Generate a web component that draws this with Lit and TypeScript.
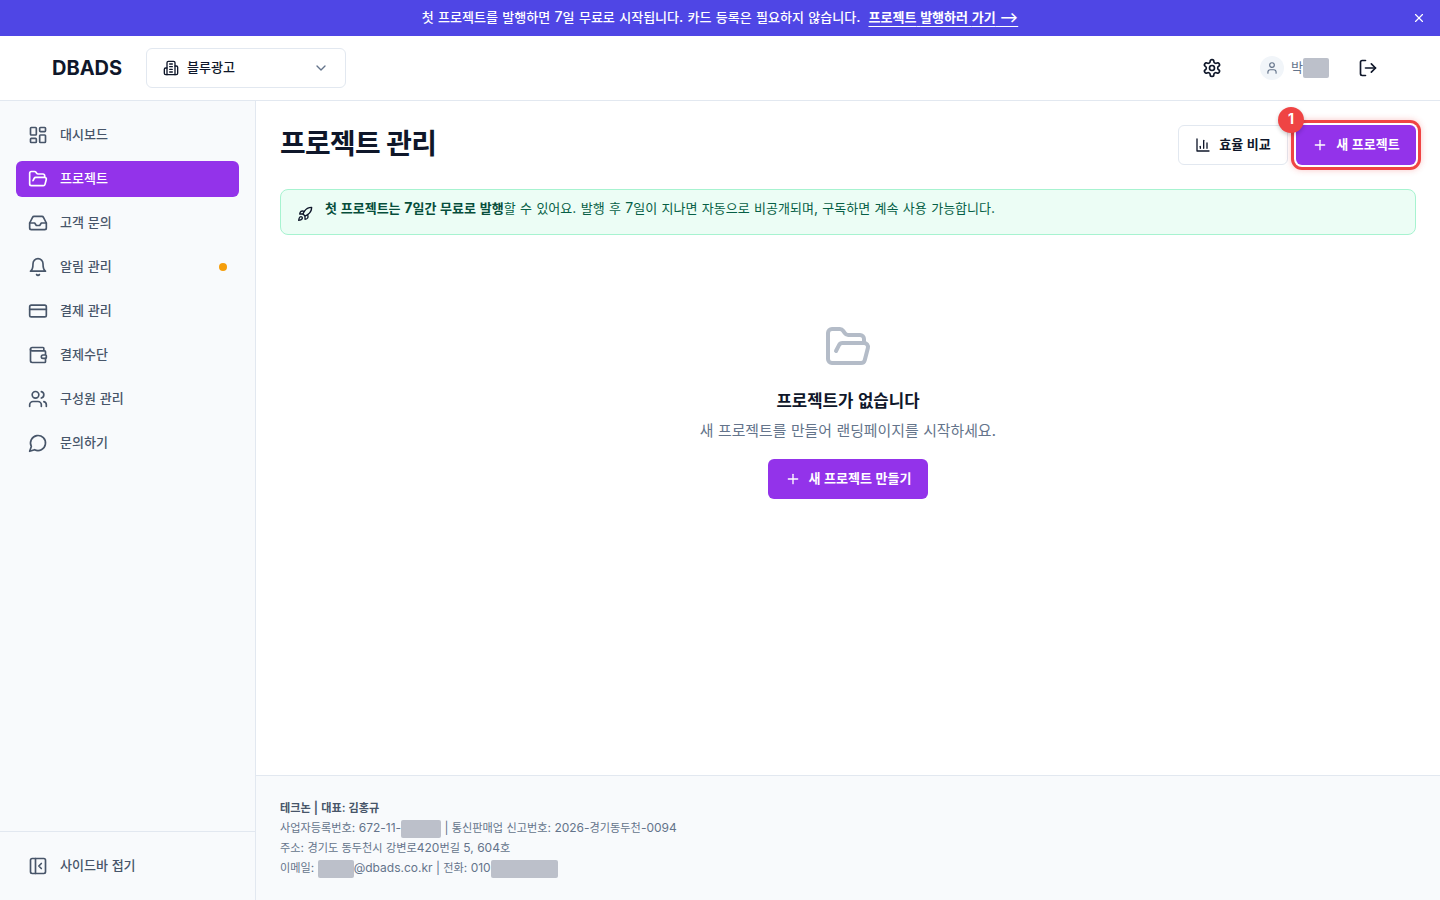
import { LitElement, html, css, svg } from "lit";
import { customElement } from "lit/decorators.js";

const ic = (body: unknown, size = 20, sw = 2) => html`<svg width=${size} height=${size} viewBox="0 0 24 24" fill="none" stroke="currentColor" stroke-width=${sw} stroke-linecap="round" stroke-linejoin="round">${body}</svg>`;

/* Hangul runs are set slightly smaller than Latin, as in the reference; both share one raised baseline */
const k = (t: string) =>
  t.split(/([\uAC00-\uD7A3]+)/).map((p, i) =>
    i % 2 ? html`<span class="k">${p}</span>` : p.trim() ? html`<span class="r">${p}</span>` : p
  );

const I = {
  grid: svg`<rect x="3" y="3" width="7" height="9" rx="1"/><rect x="14" y="3" width="7" height="5" rx="1"/><rect x="14" y="12" width="7" height="9" rx="1"/><rect x="3" y="16" width="7" height="5" rx="1"/>`,
  folder: svg`<path d="m6 14 1.5-2.9A2 2 0 0 1 9.24 10H20a2 2 0 0 1 1.94 2.5l-1.54 6a2 2 0 0 1-1.95 1.5H4a2 2 0 0 1-2-2V5a2 2 0 0 1 2-2h3.9a2 2 0 0 1 1.69.9l.81 1.2a2 2 0 0 0 1.67.9H18a2 2 0 0 1 2 2v2"/>`,
  inbox: svg`<polyline points="22 12 16 12 14 15 10 15 8 12 2 12"/><path d="M5.45 5.11 2 12v6a2 2 0 0 0 2 2h16a2 2 0 0 0 2-2v-6l-3.45-6.89A2 2 0 0 0 16.76 4H7.24a2 2 0 0 0-1.79 1.11z"/>`,
  bell: svg`<path d="M6 8a6 6 0 0 1 12 0c0 7 3 9 3 9H3s3-2 3-9"/><path d="M10.3 21a1.94 1.94 0 0 0 3.4 0"/>`,
  card: svg`<rect width="20" height="14" x="2" y="5" rx="2"/><line x1="2" x2="22" y1="10" y2="10"/>`,
  wallet: svg`<path d="M19 7V4a1 1 0 0 0-1-1H5a2 2 0 0 0 0 4h15a1 1 0 0 1 1 1v4h-3a2 2 0 0 0 0 4h3a1 1 0 0 0 1-1v-2a1 1 0 0 0-1-1"/><path d="M3 5v14a2 2 0 0 0 2 2h15a1 1 0 0 0 1-1v-4"/>`,
  users: svg`<path d="M16 21v-2a4 4 0 0 0-4-4H6a4 4 0 0 0-4 4v2"/><circle cx="9" cy="7" r="4"/><path d="M22 21v-2a4 4 0 0 0-3-3.87"/><path d="M16 3.13a4 4 0 0 1 0 7.75"/>`,
  chat: svg`<path d="M7.9 20A9 9 0 1 0 4 16.1L2 22Z"/>`,
  collapse: svg`<rect width="18" height="18" x="3" y="3" rx="2"/><path d="M9 3v18"/><path d="m16 15-3-3 3-3"/>`,
  building: svg`<path d="M6 22V4a2 2 0 0 1 2-2h8a2 2 0 0 1 2 2v18Z"/><path d="M6 12H4a2 2 0 0 0-2 2v6a2 2 0 0 0 2 2h2"/><path d="M18 9h2a2 2 0 0 1 2 2v9a2 2 0 0 1-2 2h-2"/><path d="M10 6h4"/><path d="M10 10h4"/><path d="M10 14h4"/><path d="M10 18h4"/>`,
  chevron: svg`<path d="m6 9 6 6 6-6"/>`,
  gear: svg`<path d="M12.22 2h-.44a2 2 0 0 0-2 2v.18a2 2 0 0 1-1 1.73l-.43.25a2 2 0 0 1-2 0l-.15-.08a2 2 0 0 0-2.73.73l-.22.38a2 2 0 0 0 .73 2.73l.15.1a2 2 0 0 1 1 1.72v.51a2 2 0 0 1-1 1.74l-.15.09a2 2 0 0 0-.73 2.73l.22.38a2 2 0 0 0 2.73.73l.15-.08a2 2 0 0 1 2 0l.43.25a2 2 0 0 1 1 1.73V20a2 2 0 0 0 2 2h.44a2 2 0 0 0 2-2v-.18a2 2 0 0 1 1-1.73l.43-.25a2 2 0 0 1 2 0l.15.08a2 2 0 0 0 2.73-.73l.22-.39a2 2 0 0 0-.73-2.73l-.15-.08a2 2 0 0 1-1-1.74v-.5a2 2 0 0 1 1-1.74l.15-.09a2 2 0 0 0 .73-2.73l-.22-.38a2 2 0 0 0-2.73-.73l-.15.08a2 2 0 0 1-2 0l-.43-.25a2 2 0 0 1-1-1.73V4a2 2 0 0 0-2-2z"/><circle cx="12" cy="12" r="3"/>`,
  user: svg`<path d="M19 21v-2a4 4 0 0 0-4-4H9a4 4 0 0 0-4 4v2"/><circle cx="12" cy="7" r="4"/>`,
  logout: svg`<path d="M9 21H5a2 2 0 0 1-2-2V5a2 2 0 0 1 2-2h4"/><polyline points="16 17 21 12 16 7"/><line x1="21" x2="9" y1="12" y2="12"/>`,
  x: svg`<path d="M18 6 6 18"/><path d="m6 6 12 12"/>`,
  plus: svg`<path d="M5 12h14"/><path d="M12 5v14"/>`,
  chart: svg`<path d="M3 3v18h18"/><path d="M18 17V9"/><path d="M13 17V5"/><path d="M8 17v-3"/>`,
  rocket: svg`<path d="M4.5 16.5c-1.5 1.26-2 5-2 5s3.74-.5 5-2c.71-.84.7-2.13-.09-2.91a2.18 2.18 0 0 0-2.91-.09z"/><path d="m12 15-3-3a22 22 0 0 1 2-3.95A12.88 12.88 0 0 1 22 2c0 2.72-.78 7.5-6 11a22.35 22.35 0 0 1-4 2z"/><path d="M9 12H4s.55-3.03 2-4c1.62-1.08 5 0 5 0"/><path d="M12 15v5s3.03-.55 4-2c1.08-1.62 0-5 0-5"/>`,
};

const NAV: [unknown, string, boolean?, boolean?][] = [
  [I.grid, "대시보드"],
  [I.folder, "프로젝트", true],
  [I.inbox, "고객 문의"],
  [I.bell, "알림 관리", false, true],
  [I.card, "결제 관리"],
  [I.wallet, "결제수단"],
  [I.users, "구성원 관리"],
  [I.chat, "문의하기"],
];

@customElement("app-root")
export class AppRoot extends LitElement {
  static styles = css`
    :host { display: flex; flex-direction: column; width: 1440px; height: 900px; overflow: hidden; background: #fff; color: #0f172a;
      font-family: Inter, "Noto Sans CJK KR", "Noto Sans", sans-serif; font-size: 14px; }
    svg { display: block; flex: none; }
    .k { font-size: 0.93em; line-height: 1; vertical-align: 0.13em; }
    .r { line-height: 1; vertical-align: 0.12em; }
    .banner { height: 36px; flex: none; background: #4f46e5; color: #fff; display: flex; align-items: center; justify-content: center; gap: 8px; font-size: 14px; font-weight: 500; word-spacing: 0.6px; position: relative; }
    .banner a { font-weight: 600; text-decoration: underline; text-underline-offset: 2px; word-spacing: 0.2px; }
    .close { position: absolute; right: 14px; top: 11px; }
    .top { height: 64px; flex: none; border-bottom: 1px solid #e2e8f0; display: flex; align-items: center; padding: 0 62px 0 52px; }
    .logo { font-size: 20px; font-weight: 700; width: 94px; color: #0f172a; }
    .select { width: 200px; height: 40px; box-sizing: border-box; border: 1px solid #e2e8f0; border-radius: 6px; display: flex; align-items: center; padding: 0 16px; gap: 8px; font-size: 14px; font-weight: 500; }
    .select .chev { margin-left: auto; color: #64748b; }
    .right { margin-left: auto; display: flex; align-items: center; }
    .gear { margin-right: 38px; color: #0f172a; }
    .avatar { width: 24px; height: 24px; border-radius: 50%; background: #f1f5f9; color: #64748b; display: flex; align-items: center; justify-content: center; margin-right: 7px; }
    .name { font-size: 14px; color: #64748b; display: flex; align-items: center; width: 38px; margin-right: 29px; }
    .blur { display: inline-block; background: #bcc0ca; border-radius: 2px; vertical-align: -5px; }
    .body { flex: 1; display: flex; min-height: 0; }
    .side { width: 256px; flex: none; box-sizing: border-box; background: #f8fafc; border-right: 1px solid #e2e8f0; display: flex; flex-direction: column; }
    .nav { flex: 1; padding: 16px; display: flex; flex-direction: column; gap: 8px; }
    .item { height: 36px; border-radius: 6px; display: flex; align-items: center; gap: 12px; padding: 0 12px; color: #475569; font-size: 14px; font-weight: 500; }
    .item.on { background: #9333ea; color: #fff; }
    .dot { width: 8px; height: 8px; background: #f59e0b; border-radius: 50%; margin-left: auto; }
    .foot { height: 69px; box-sizing: border-box; border-top: 1px solid #e2e8f0; padding: 16px; display: flex; }
    .foot .item { flex: 1; }
    .main { flex: 1; display: flex; flex-direction: column; min-width: 0; background: #fff; }
    .content { flex: 1; padding: 24px 24px 0; }
    .head { display: flex; justify-content: space-between; height: 64px; }
    h1 { margin: 4px 0 0; font-size: 30px; line-height: 36px; font-weight: 700; letter-spacing: -0.7px; color: #0f172a; }
    .btns { display: flex; gap: 8px; }
    .btn { height: 40px; box-sizing: border-box; border-radius: 6px; display: flex; align-items: center; justify-content: center; gap: 8px; font-size: 14px; font-weight: 600; }
    .outline { width: 110px; border: 1px solid #e2e8f0; background: #fff; color: #0f172a; }
    .primary { background: #9333ea; color: #fff; }
    .new { width: 120px; outline: none; box-shadow: 0 0 0 2px #fff, 0 0 0 5px #ef4444, 0 0 6px 5px rgba(239,68,68,.3); position: relative; }
    .badge { position: absolute; left: -18px; top: -18px; width: 26px; height: 26px; box-sizing: border-box; padding-bottom: 3px; border-radius: 50%; background: #ef4444; color: #fff; font-size: 14px; font-weight: 700; display: flex; align-items: center; justify-content: center; box-shadow: 0 2px 4px rgba(0,0,0,.2); }
    .alert { height: 46px; box-sizing: border-box; border: 1px solid #a7f3d0; border-radius: 8px; background: #ecfdf5; display: flex; align-items: flex-start; padding: 10px 16px; gap: 12px; color: #065f46; font-size: 14px; line-height: 20px; word-spacing: 0.4px; }
    .alert svg { margin-top: 6px; color: #0f172a; }
    .alert b { font-weight: 700; color: #064e3b; }
    .empty { display: flex; flex-direction: column; align-items: center; padding-top: 88px; }
    .empty .fi { color: #b4bcc8; }
    .empty h3 { margin: 18px 0 0; font-size: 18px; line-height: 28px; font-weight: 600; color: #0f172a; }
    .empty p { margin: 3px 0 0; font-size: 16px; line-height: 24px; color: #64748b; }
    .cta { width: 160px; margin-top: 15px; }
    .foot2 { height: 125px; flex: none; box-sizing: border-box; background: #f8fafc; border-top: 1px solid #e2e8f0; padding: 23px 24px 0; font-size: 12px; line-height: 20px; color: #64748b; }
    .foot2 .k, .foot2 .r { vertical-align: 0.06em; }
    .foot2 .t { font-weight: 600; color: #475569; }
  `;

  render() {
    return html`
      <div class="banner">
        <span>${k("첫 프로젝트를 발행하면 7일 무료로 시작됩니다. 카드 등록은 필요하지 않습니다.")}</span>
        <a>${k("프로젝트 발행하러 가기 ⟶")}</a>
        <span class="close">${ic(I.x, 14)}</span>
      </div>
      <div class="top">
        <div class="logo">DBADS</div>
        <div class="select">${ic(I.building, 16)}<span>${k("블루광고")}</span><span class="chev">${ic(I.chevron, 16)}</span></div>
        <div class="right">
          <span class="gear">${ic(I.gear, 20)}</span>
          <span class="avatar">${ic(I.user, 14)}</span>
          <span class="name">${k("박")}<span class="blur" style="width:26px;height:20px"></span></span>
          ${ic(I.logout, 20)}
        </div>
      </div>
      <div class="body">
        <aside class="side">
          <div class="nav">
            ${NAV.map(([i, t, on, dot]) => html`<div class="item ${on ? "on" : ""}">${ic(i)}<span>${k(t)}</span>${dot ? html`<span class="dot"></span>` : ""}</div>`)}
          </div>
          <div class="foot"><div class="item">${ic(I.collapse)}<span>${k("사이드바 접기")}</span></div></div>
        </aside>
        <main class="main">
          <div class="content">
            <div class="head">
              <h1>${k("프로젝트 관리")}</h1>
              <div class="btns">
                <div class="btn outline">${ic(I.chart, 16)}<span>${k("효율 비교")}</span></div>
                <div class="btn primary new"><span class="badge">1</span>${ic(I.plus, 16)}<span>${k("새 프로젝트")}</span></div>
              </div>
            </div>
            <div class="alert">${ic(I.rocket, 16)}<span><b>${k("첫 프로젝트는 7일간 무료로 발행")}</b>${k("할 수 있어요. 발행 후 7일이 지나면 자동으로 비공개되며, 구독하면 계속 사용 가능합니다.")}</span></div>
            <div class="empty">
              <span class="fi">${ic(I.folder, 48)}</span>
              <h3>${k("프로젝트가 없습니다")}</h3>
              <p>${k("새 프로젝트를 만들어 랜딩페이지를 시작하세요.")}</p>
              <div class="btn primary cta">${ic(I.plus, 16)}<span>${k("새 프로젝트 만들기")}</span></div>
            </div>
          </div>
          <footer class="foot2">
            <div class="t">${k("테크논 | 대표: 김홍규")}</div>
            <div>${k("사업자등록번호: 672-11-")}<span class="blur" style="width:40px;height:18px"></span>${k(" | 통신판매업 신고번호: 2026-경기동두천-0094")}</div>
            <div>${k("주소: 경기도 동두천시 강변로420번길 5, 604호")}</div>
            <div>${k("이메일: ")}<span class="blur" style="width:36px;height:18px"></span>${k("@dbads.co.kr | 전화: 010")}<span class="blur" style="width:67px;height:18px"></span></div>
          </footer>
        </main>
      </div>
    `;
  }
}
